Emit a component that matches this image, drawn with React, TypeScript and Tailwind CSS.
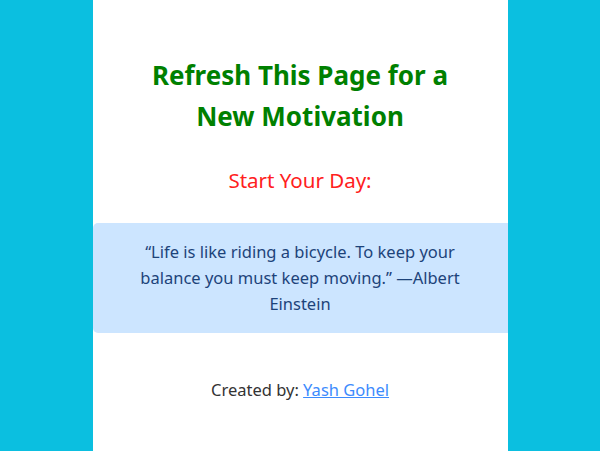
import React from "react";

const App: React.FC = () => {
  return (
    <div className="min-h-screen w-full bg-[#0bbfe0] flex justify-center font-['Noto_Sans',sans-serif]">
      <div className="w-[415px] min-h-screen bg-white flex flex-col items-center pt-[55px]">
        <h1 className="text-[26px] leading-[41px] font-bold text-[#008000] text-center px-10">
          Refresh This Page for a New Motivation
        </h1>
        <h2 className="mt-[28px] text-[20.5px] leading-[30px] text-[#ff2020] text-center">
          Start Your Day:
        </h2>
        <div className="mt-[28px] w-full bg-[#cce5ff] rounded-l-[5px] px-[40px] py-[16px] text-center text-[16.5px] leading-[26px] text-[#1d437a]">
          “Life is like riding a bicycle. To keep your balance you must keep moving.” —Albert Einstein
        </div>
        <p className="mt-[45px] text-[16.5px] leading-[24px] text-[#333] text-center">
          Created by:{" "}
          <a href="#" className="text-[#3d8bfd] underline">
            Yash Gohel
          </a>
        </p>
      </div>
    </div>
  );
};

export default App;
